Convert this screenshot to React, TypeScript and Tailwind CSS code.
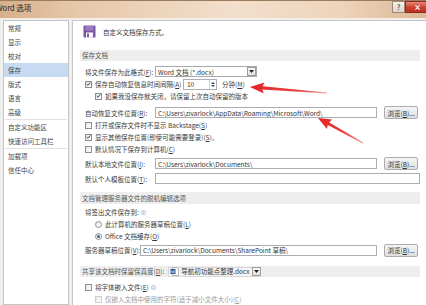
import type { ReactNode } from "react";
import clsx from "clsx";

const NAV: (string | null)[] = [
  "常规",
  "显示",
  "校对",
  "保存",
  "版式",
  "语言",
  "高级",
  null,
  "自定义功能区",
  "快速访问工具栏",
  null,
  "加载项",
  "信任中心",
];

function K({ children }: { children: ReactNode }) {
  return <span className="underline decoration-[0.5px] underline-offset-[1px]">{children}</span>;
}

function Check({ checked, disabled }: { checked?: boolean; disabled?: boolean }) {
  return (
    <span
      className={clsx(
        "flex h-[7px] w-[7px] shrink-0 items-center justify-center border bg-[linear-gradient(135deg,#e9e9e9,#ffffff)]",
        disabled ? "border-[#cfcfcf]" : "border-[#8e8f8f]",
      )}
    >
      {checked && (
        <svg viewBox="0 0 7 7" className="h-[6px] w-[6px]">
          <path d="M1 3.6 L2.8 5.4 L6 1.2" fill="none" stroke="#1d3557" strokeWidth="1.3" />
        </svg>
      )}
    </span>
  );
}

function Radio({ checked }: { checked?: boolean }) {
  return (
    <span className="flex h-[7px] w-[7px] shrink-0 items-center justify-center rounded-full border border-[#8e8f8f] bg-[linear-gradient(135deg,#e6e6e6,#ffffff)]">
      {checked && <span className="h-[3px] w-[3px] rounded-full bg-[#3b6a9c]" />}
    </span>
  );
}

function Info() {
  return (
    <svg viewBox="0 0 6 6" className="ml-[2px] h-[5px] w-[5px] shrink-0">
      <circle cx="3" cy="3" r="2.5" fill="none" stroke="#7aa3d6" strokeWidth="0.7" />
      <path d="M3 2.6 V4.4 M3 1.5 V1.9" stroke="#4c7fc0" strokeWidth="0.7" />
    </svg>
  );
}

function DropBtn() {
  return (
    <span className="flex h-[9px] w-[9px] shrink-0 items-center justify-center border border-[#9c9c9c] bg-[linear-gradient(#fbfbfb,#e2e2e2)]">
      <svg viewBox="0 0 5 3" className="h-[3px] w-[5px]">
        <path d="M0 0 H5 L2.5 3 Z" fill="#222" />
      </svg>
    </span>
  );
}

function Field({ w, children }: { w: string; children?: ReactNode }) {
  return (
    <div
      className={clsx(
        "flex h-[11px] shrink-0 items-center overflow-hidden border border-[#abadb3] bg-white pl-[2px] text-[#333]",
        w,
      )}
    >
      {children}
    </div>
  );
}

function Browse() {
  return (
    <div className="ml-[7px] flex h-[13px] w-[34px] shrink-0 items-center justify-center rounded-[2px] border border-[#acacac] bg-[linear-gradient(#f6f6f6,#dedede)] text-[#333]">
      浏览(<K>B</K>)...
    </div>
  );
}

function SaveIcon() {
  return (
    <svg viewBox="0 0 13 13" className="h-[13px] w-[13px] shrink-0">
      <rect x="0.5" y="0.5" width="12" height="12" rx="1" fill="#7b55a6" />
      <rect x="2.5" y="1" width="8" height="4.5" fill="#9c7cc2" />
      <rect x="3" y="7.5" width="7" height="5" fill="#ffffff" />
      <rect x="4" y="8.5" width="2" height="3.5" fill="#7b55a6" />
    </svg>
  );
}

function DocIcon() {
  return (
    <svg viewBox="0 0 9 9" className="h-[9px] w-[9px] shrink-0">
      <path d="M2.5 0.5 H7 L8.5 2 V8.5 H2.5 Z" fill="#fff" stroke="#8a8a8a" strokeWidth="0.6" />
      <rect x="0.5" y="2" width="5" height="5" fill="#2b5797" />
      <path d="M1.3 3 L2 6 L3 4 L4 6 L4.7 3" fill="none" stroke="#fff" strokeWidth="0.5" />
    </svg>
  );
}

function Bar({ children, className }: { children: ReactNode; className?: string }) {
  return (
    <div className={clsx("flex items-center bg-[#eeeeee] pl-[2px] text-[#555]", className)}>
      {children}
    </div>
  );
}

function TitleBar() {
  return (
    <div className="flex h-[18px] items-start border-t border-[#9b7b5d] bg-[linear-gradient(to_right,#d6b08c,#e6c8aa_18%,#f3dfcc_55%,#eed4bc_80%,#dbb693)]">
      <span className="ml-[-4px] mt-[3px] text-[7.5px] text-[#1e1e1e]">Word 选项</span>
      <div className="ml-auto flex">
        <div className="flex h-[12px] w-[13px] items-center justify-center border border-[#a08a76] bg-[linear-gradient(#f7f2ed,#ddd3c9)] text-[7px] font-bold text-[#555]">
          ?
        </div>
        <div className="mr-[-4px] flex h-[12px] w-[25px] items-center justify-center border border-[#8e2a20] bg-[linear-gradient(#e9897c,#cc4331_50%,#b83321)]">
          <svg viewBox="0 0 6 6" className="h-[5px] w-[5px]">
            <path d="M0.5 0.5 L5.5 5.5 M5.5 0.5 L0.5 5.5" stroke="#fff" strokeWidth="1.3" />
          </svg>
        </div>
      </div>
    </div>
  );
}

function Arrows() {
  return (
    <svg className="pointer-events-none absolute left-0 top-0" width="426" height="305" viewBox="0 0 426 305">
      <defs>
        <linearGradient id="a1" x1="250" y1="87" x2="327" y2="93" gradientUnits="userSpaceOnUse">
          <stop offset="0" stopColor="#e12424" />
          <stop offset="0.6" stopColor="#e8423f" />
          <stop offset="1" stopColor="#f0a0a0" />
        </linearGradient>
        <linearGradient id="a2" x1="318" y1="118" x2="363" y2="143" gradientUnits="userSpaceOnUse">
          <stop offset="0" stopColor="#e12424" />
          <stop offset="0.6" stopColor="#e8423f" />
          <stop offset="1" stopColor="#f0a0a0" />
        </linearGradient>
      </defs>
      <polygon
        points="250,87 264.6,82.6 262.6,86.3 327,92.5 327,93.6 262.4,89.6 263.8,93.6"
        fill="url(#a1)"
      />
      <polygon
        points="318,118 332,119.6 329.3,122.4 363.3,142.6 362.7,143.5 327.8,125.1 326.9,129.1"
        fill="url(#a2)"
      />
    </svg>
  );
}

export default function App() {
  return (
    <div className="relative h-[305px] w-[426px] overflow-hidden whitespace-nowrap bg-[#efefef] font-['Noto_Sans_CJK_SC',sans-serif] text-[6.5px] leading-none text-[#3a3a3a]">
      <TitleBar />
      <div className="flex h-[287px] gap-[3px] border-t border-[#f6ece2] pl-[3px] pt-[1px]">
        {/* left nav */}
        <div className="flex w-[66px] shrink-0 flex-col border border-[#c6c6c6] bg-white text-[#444]">
          {NAV.map((item, i) =>
            item === null ? (
              <div key={i} className="mx-[1px] h-px bg-[#e2e2e2]" />
            ) : (
              <div
                key={i}
                className={clsx("flex h-[14px] items-center pl-[4px]", item === "保存" && "bg-[#c6dbf1]")}
              >
                {item}
              </div>
            ),
          )}
        </div>

        {/* main panel */}
        <div className="flex min-w-0 flex-1 flex-col border-l border-t border-[#c6c6c6] bg-white pl-[7px] pr-[6px]">
          <div className="mt-[4px] flex h-[14px] items-center pl-[3px]">
            <SaveIcon />
            <span className="ml-[7px] text-[#333]">自定义文档保存方式。</span>
          </div>

          <Bar className="mt-[11px] h-[12px]">保存文档</Bar>

          <div className="flex flex-col pl-[5px]">
            <div className="mt-[5px] flex h-[11px] items-center">
              <span className="w-[70px] shrink-0">
                将文件保存为此格式(<K>F</K>):
              </span>
              <div className="flex h-[11px] w-[102px] items-center border border-[#a9a9a9] bg-white pl-[2px]">
                <span className="flex-1 text-[#333]">Word 文档 (*.docx)</span>
                <DropBtn />
              </div>
            </div>

            <div className="mt-[1px] flex h-[12px] items-center">
              <Check checked />
              <span className="ml-[3px] w-[88px] shrink-0">
                保存自动恢复信息时间间隔(<K>A</K>)
              </span>
              <div className="flex h-[11px] w-[34px] items-center border border-[#abadb3] bg-white pl-[3px]">
                <span className="flex-1 text-[#333]">10</span>
                <span className="flex h-full w-[7px] flex-col items-center justify-center gap-[1px] border-l border-[#d4d4d4]">
                  <svg viewBox="0 0 4 2" className="h-[2px] w-[4px]">
                    <path d="M0 2 L2 0 L4 2 Z" fill="#444" />
                  </svg>
                  <svg viewBox="0 0 4 2" className="h-[2px] w-[4px]">
                    <path d="M0 0 L2 2 L4 0 Z" fill="#444" />
                  </svg>
                </span>
              </div>
              <span className="ml-[5px]">
                分钟(<K>M</K>)
              </span>
            </div>

            <div className="flex h-[12px] items-center pl-[10px]">
              <Check checked />
              <span className="ml-[3px]">如果我没保存就关闭，请保留上次自动保留的版本</span>
            </div>

            <div className="mt-[4px] flex h-[13px] items-center">
              <span className="w-[70px] shrink-0">
                自动恢复文件位置(<K>R</K>):
              </span>
              <Field w="w-[222px]">C:\Users\zivarlock\AppData\Roaming\Microsoft\Word\</Field>
              <Browse />
            </div>

            <div className="flex h-[12px] items-center">
              <Check />
              <span className="ml-[3px]">
                打开或保存文件时不显示 Backstage(<K>S</K>)
              </span>
            </div>
            <div className="flex h-[12px] items-center">
              <Check checked />
              <span className="ml-[3px]">
                显示其他保存位置(即使可能需要登录)(<K>S</K>)。
              </span>
            </div>
            <div className="flex h-[12px] items-center">
              <Check />
              <span className="ml-[3px]">
                默认情况下保存到计算机(<K>C</K>)
              </span>
            </div>

            <div className="mt-[2px] flex h-[13px] items-center">
              <span className="w-[70px] shrink-0">
                默认本地文件位置(<K>I</K>):
              </span>
              <Field w="w-[222px]">C:\Users\zivarlock\Documents\</Field>
              <Browse />
            </div>
            <div className="mt-[2px] flex h-[13px] items-center">
              <span className="w-[70px] shrink-0">
                默认个人模板位置(<K>T</K>):
              </span>
              <Field w="w-[265px]" />
            </div>
          </div>

          <Bar className="mt-[7px] h-[12px]">文档管理服务器文件的脱机编辑选项</Bar>

          <div className="flex flex-col pl-[5px]">
            <div className="mt-[2px] flex h-[12px] items-center">
              <span>将签出文件保存到:</span>
              <Info />
            </div>
            <div className="flex h-[12px] items-center pl-[10px]">
              <Radio />
              <span className="ml-[3px]">
                此计算机的服务器草稿位置(<K>L</K>)
              </span>
            </div>
            <div className="flex h-[12px] items-center pl-[10px]">
              <Radio checked />
              <span className="ml-[3px]">
                Office 文档缓存(<K>O</K>)
              </span>
            </div>
            <div className="mt-[1px] flex h-[14px] items-center">
              <span className="w-[55px] shrink-0">
                服务器草稿位置(<K>V</K>):
              </span>
              <Field w="w-[237px]">C:\Users\zivarlock\Documents\SharePoint 草稿\</Field>
              <Browse />
            </div>
          </div>

          <Bar className="mt-[9px] h-[11px]">
            <span>
              共享该文档时保留保真度(<K>D</K>):
            </span>
            <div className="ml-[4px] flex h-[10px] w-[92px] items-center gap-[2px] border border-[#d8d8d8] bg-[#f4f4f4] pl-[1px]">
              <DocIcon />
              <span className="flex-1 text-[#333]">导航初功能点整理.docx</span>
              <DropBtn />
            </div>
          </Bar>

          <div className="flex flex-col pl-[5px]">
            <div className="mt-[4px] flex h-[12px] items-center">
              <Check />
              <span className="ml-[3px]">
                将字体嵌入文件(<K>E</K>)
              </span>
              <Info />
            </div>
            <div className="flex h-[12px] items-center pl-[10px] text-[#9a9a9a]">
              <Check disabled />
              <span className="ml-[3px]">
                仅嵌入文档中使用的字符(适于减小文件大小)(<K>C</K>)
              </span>
            </div>
          </div>
        </div>
      </div>
      <Arrows />
    </div>
  );
}
